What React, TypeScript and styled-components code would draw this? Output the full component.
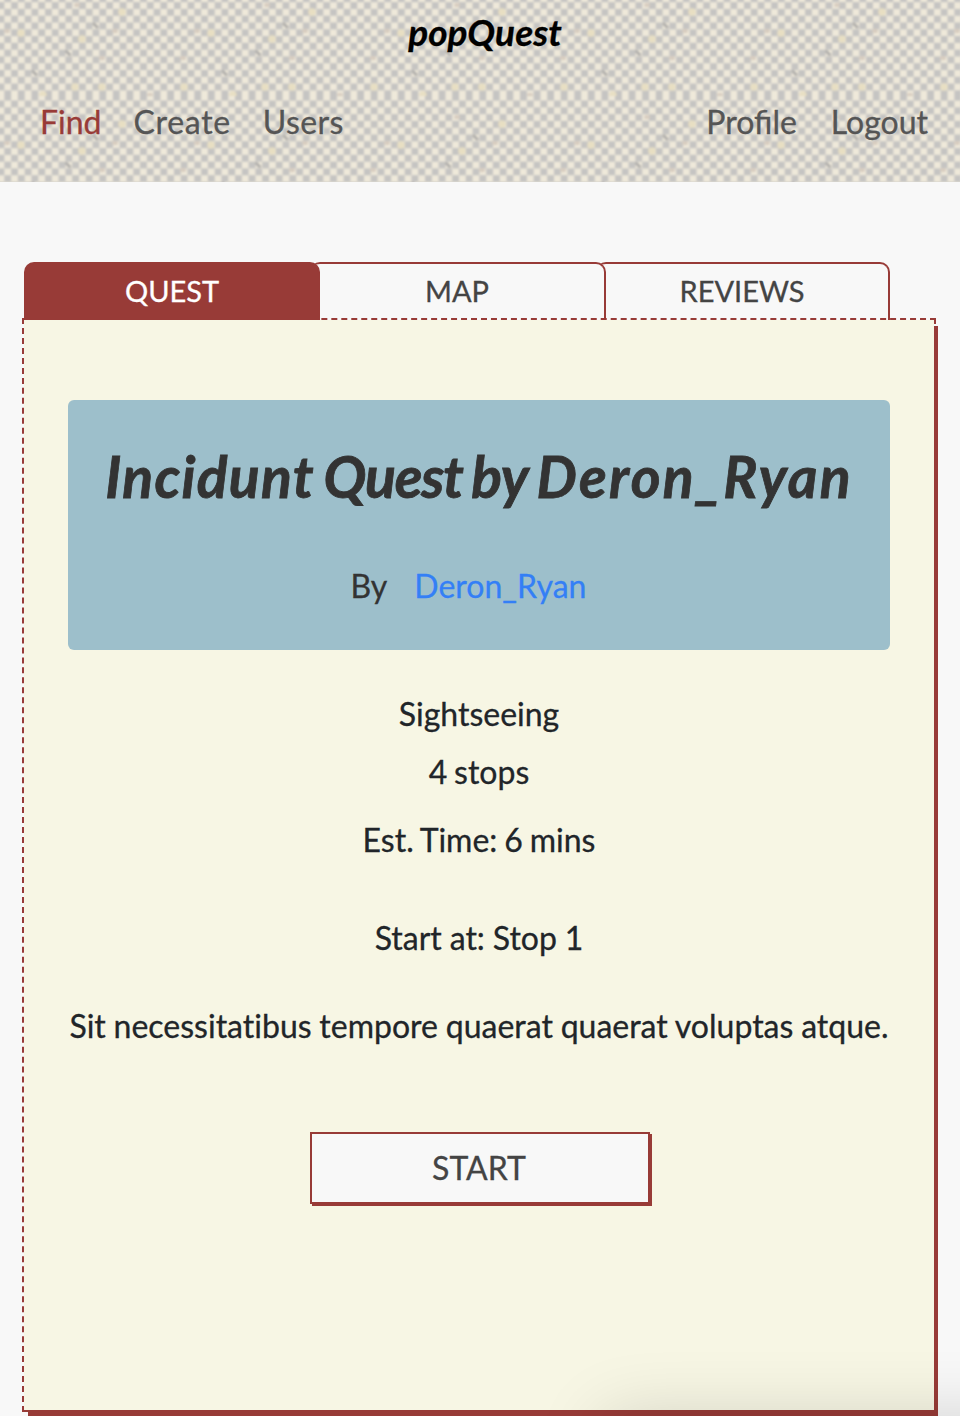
import React from "react";
import styled, { createGlobalStyle } from "styled-components";

const RED = "#983b37";

const GlobalStyle = createGlobalStyle`
  *, *::before, *::after { box-sizing: border-box; }
  html { background: #f8f8f8; }
  body {
    margin: 0;
    height: 1416px;
    overflow: hidden;
    background: #f8f8f8;
    color: #212529;
    font-family: Lato, "Liberation Sans", sans-serif;
    font-size: 32px;
    line-height: 48px;
    -webkit-text-stroke: 0.3px currentColor;
  }
`;

const Page = styled.div`
  position: relative;
  height: 1416px;
  overflow: hidden;
`;

const Header = styled.header`
  position: relative;
  height: 182px;
  background: #dcd8cf;
`;

const Weave = styled.svg`
  position: absolute;
  inset: 0;
  width: 100%;
  height: 100%;
`;

const Brand = styled.div`
  position: relative;
  height: 98px;
  padding: 8px 0 0 10px;
  text-align: center;
  color: #000;
  font-size: 37px;
  font-weight: 700;
  font-style: italic;
`;

const Nav = styled.nav`
  position: relative;
  display: flex;
  justify-content: space-between;
  padding: 0 32px 0 40px;
`;

const NavGroup = styled.div<{ $gap: number }>`
  display: flex;
  gap: ${(p) => p.$gap}px;
`;

const NavLink = styled.a<{ $active?: boolean; $tracking?: number }>`
  color: ${(p) => (p.$active ? RED : "#555")};
  letter-spacing: ${(p) => (p.$tracking ? `${p.$tracking}px` : "normal")};
`;

const Tabs = styled.div`
  display: flex;
  margin: 80px 70px 0 24px;
`;

const Tab = styled.button<{ $active?: boolean; $width: number; $layer: number }>`
  position: relative;
  z-index: ${(p) => p.$layer};
  width: ${(p) => p.$width}px;
  height: 58px;
  margin: 0 0 0 ${(p) => (p.$active ? 0 : -10)}px;
  padding: 0 0 2px;
  border: 2px solid ${RED};
  border-left-width: ${(p) => (p.$active ? 2 : 0)}px;
  border-bottom: 0;
  border-radius: 10px 10px 0 0;
  background: ${(p) => (p.$active ? RED : "#f8f8f8")};
  color: ${(p) => (p.$active ? "#fff" : "#444")};
  font: 400 29px/54px Lato, sans-serif;
`;

const Panel = styled.main`
  position: relative;
  z-index: 3;
  display: flex;
  flex-direction: column;
  align-items: center;
  width: 914px;
  height: 1094px;
  margin: -2px 0 0 22px;
  padding: 80px 44px 0;
  border: 2px dashed ${RED};
  background: #f7f6e4 padding-box;

  &::after {
    content: "";
    position: absolute;
    inset: 6px -4px -6px 4px;
    border: solid ${RED};
    border-width: 0 4px 6px 0;
    pointer-events: none;
  }
`;

const Banner = styled.section`
  width: 822px;
  height: 250px;
  padding-top: 36px;
  border-radius: 6px;
  background: #9dbfcb;
  color: #333;
  text-align: center;
`;

const Title = styled.h1`
  margin: 0 0 46px;
  font-size: 57px;
  line-height: 80px;
  font-weight: 700;
  font-style: italic;
  white-space: nowrap;
  word-spacing: -4px;
  -webkit-text-stroke-width: 0.8px;
`;

const Word = styled.span<{ $tracking: number }>`
  letter-spacing: ${(p) => p.$tracking}px;
`;

const Byline = styled.div`
  display: flex;
  justify-content: center;
  gap: 27px;
  padding-right: 21px;
`;

const UserLink = styled.a`
  color: #347ff6;
`;

const Line = styled.p<{ $top: number; $spacing?: number }>`
  margin: ${(p) => p.$top}px 0 0;
  white-space: nowrap;
  word-spacing: ${(p) => p.$spacing ?? -1.3}px;
  font-variant-ligatures: none;
`;

const StartButton = styled.button`
  width: 340px;
  height: 72px;
  flex: none;
  margin: 82px 0 0 2px;
  padding: 0 2px 0 0;
  border: 2px solid ${RED};
  background: #f8f8f8;
  box-shadow: 2px 2px 0 ${RED};
  color: #444;
  font: 400 32px/48px Lato, sans-serif;
`;

const CornerShade = styled.div`
  position: absolute;
  z-index: 4;
  left: 610px;
  top: 1424px;
  width: 500px;
  height: 100px;
  box-shadow: 0 0 70px 6px rgba(0, 0, 0, 0.16);
`;

const CELL = 190 / 28;
const yellowKnots = [[21, 49], [82, 55], [122, 28], [75, 103], [102, 103], [184, 103], [43, 111]];
const roseKnots = [[7, 47], [115, 47], [77, 21], [102, 74], [183, 74], [150, 111]];
const darkKnots = [[95.5, 41.5], [68, 69], [34.5, 89]];

/* Dark threads of one woven tile, in alternating cells. */
const threads: [number, number][] = [];
for (let row = 0; row < 17; row++) {
  for (let col = 0; col < 29; col++) {
    if ((row + col) % 2 === 1) threads.push([0.95 + col * CELL, 1.2 + row * CELL]);
  }
}

const WeaveTexture = () => (
  <Weave aria-hidden="true">
    <defs>
      <filter id="soft" colorInterpolationFilters="sRGB">
        <feGaussianBlur stdDeviation="1.1" />
      </filter>
      <pattern id="weave" y="-16" width="190" height="112" patternUnits="userSpaceOnUse">
        <rect width="190" height="112" fill="#efe9da" />
        {threads.map(([x, y]) => (
          <rect key={`${x}-${y}`} x={x - 3.4} y={y - 3.4} width="6.8" height="6.8" fill="#c5c4c2" />
        ))}
        {yellowKnots.map(([x, y]) => (
          <circle key={`${x}-${y}`} cx={x} cy={y} r="3.8" fill="#e8dfc3" />
        ))}
        {roseKnots.map(([x, y]) => (
          <ellipse key={`${x}-${y}`} cx={x} cy={y} rx="3" ry="2" fill="#d8cdc0" />
        ))}
        {darkKnots.map(([x, y]) => (
          <path key={`${x}-${y}`} d={`M${x - 2.5} ${y - 2.5}l5 5`} stroke="#b0aeab" strokeWidth="3" />
        ))}
      </pattern>
    </defs>
    <rect x="-10" y="-10" width="980" height="210" fill="url(#weave)" filter="url(#soft)" />
  </Weave>
);

export default function App() {
  return (
    <Page>
      <GlobalStyle />
      <Header>
        <WeaveTexture />
        <Brand>popQuest</Brand>
        <Nav>
          <NavGroup $gap={32}>
            <NavLink $active>Find</NavLink>
            <NavLink $tracking={0.7}>Create</NavLink>
            <NavLink $tracking={0.4}>Users</NavLink>
          </NavGroup>
          <NavGroup $gap={34}>
            <NavLink>Profile</NavLink>
            <NavLink>Logout</NavLink>
          </NavGroup>
        </Nav>
      </Header>
      <Tabs>
        <Tab $active $width={296} $layer={4}>QUEST</Tab>
        <Tab $width={296} $layer={2}>MAP</Tab>
        <Tab $width={294} $layer={1}>REVIEWS</Tab>
      </Tabs>
      <Panel>
        <Banner>
          <Title>
            <Word $tracking={1.3}>Incidunt</Word> <Word $tracking={-1.2}>Quest</Word>{" "}
            <Word $tracking={-0.6}>by</Word> <Word $tracking={2.2}>Deron_Ryan</Word>
          </Title>
          <Byline>
            <span>By</span>
            <UserLink>Deron_Ryan</UserLink>
          </Byline>
        </Banner>
        <Line $top={40}>Sightseeing</Line>
        <Line $top={10}>4 stops</Line>
        <Line $top={20}>Est. Time: 6 mins</Line>
        <Line $top={50} $spacing={-0.3}>Start at: Stop 1</Line>
        <Line $top={40} $spacing={-0.4}>Sit necessitatibus tempore quaerat quaerat voluptas atque.</Line>
        <StartButton>START</StartButton>
      </Panel>
      <CornerShade />
    </Page>
  );
}
